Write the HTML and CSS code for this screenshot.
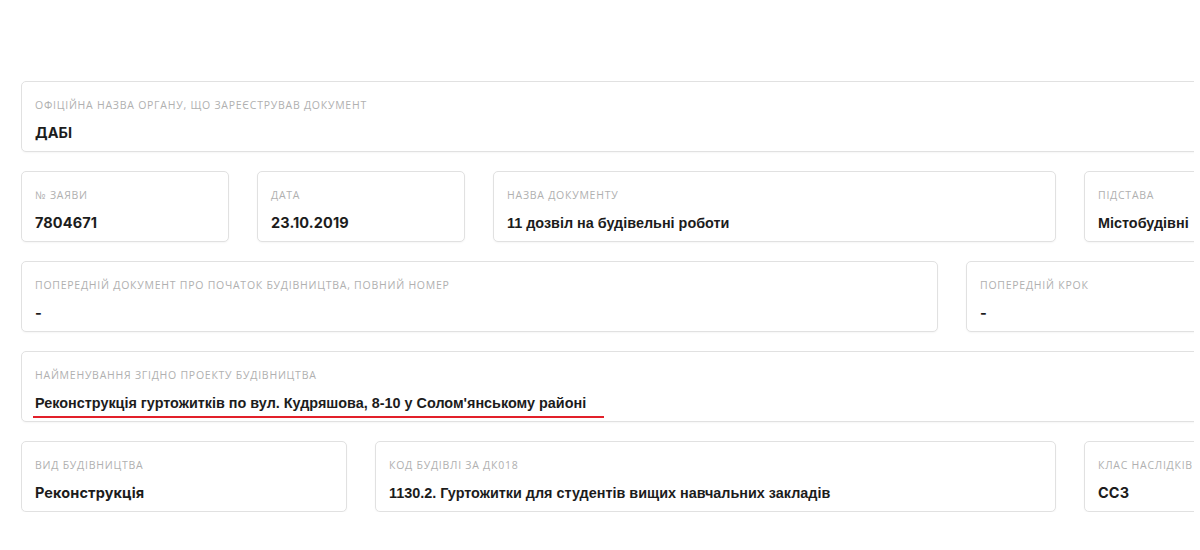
FILE: index.html
```html
<!DOCTYPE html>
<html lang="uk">
<head>
<meta charset="utf-8">
<title>Документ</title>
<link rel="stylesheet" href="styles.css">
</head>
<body>
<div class="page">
  <div class="sheet">
    <div class="row">
      <div class="card w-full">
        <div class="label">Офіційна назва органу, що зареєстрував документ</div>
        <div class="value geo">ДАБІ</div>
      </div>
    </div>
    <div class="row">
      <div class="card w-208">
        <div class="label">№ заяви</div>
        <div class="value geo">7804671</div>
      </div>
      <div class="card w-208">
        <div class="label">Дата</div>
        <div class="value geo">23.10.2019</div>
      </div>
      <div class="card w-563">
        <div class="label">Назва документу</div>
        <div class="value">11 дозвіл на будівельні роботи</div>
      </div>
      <div class="card w-tail">
        <div class="label">Підстава</div>
        <div class="value">Містобудівні</div>
      </div>
    </div>
    <div class="row">
      <div class="card w-917">
        <div class="label">Попередній документ про початок будівництва, повний номер</div>
        <div class="value geo">-</div>
      </div>
      <div class="card w-tail">
        <div class="label">Попередній крок</div>
        <div class="value geo">-</div>
      </div>
    </div>
    <div class="row">
      <div class="card w-full">
        <div class="label">Найменування згідно проекту будівництва</div>
        <div class="value"><span class="marked">Реконструкція гуртожитків по вул. Кудряшова, 8-10 у Солом'янському районі</span></div>
      </div>
    </div>
    <div class="row">
      <div class="card w-326">
        <div class="label">Вид будівництва</div>
        <div class="value geo">Реконструкція</div>
      </div>
      <div class="card w-681">
        <div class="label">Код будівлі за ДК018</div>
        <div class="value">1130.2. Гуртожитки для студентів вищих навчальних закладів</div>
      </div>
      <div class="card w-tail">
        <div class="label">Клас наслідків</div>
        <div class="value geo">СС3</div>
      </div>
    </div>
  </div>
</div>
</body>
</html>
```

FILE: styles.css
```css
html, body {
  margin: 0;
  padding: 0;
  background: #ffffff;
}

.page {
  padding: 81px 0 0 21px;
  height: 550px;
  box-sizing: border-box;
  overflow: hidden;
}

.sheet {
  width: 1173px;
  overflow: hidden;
  display: flex;
  flex-direction: column;
  gap: 19px;
}

.row {
  display: flex;
  gap: 28px;
  width: 1500px;
}

.card {
  flex: 0 0 auto;
  height: 71px;
  box-sizing: border-box;
  border: 1px solid #e1e1e1;
  border-radius: 5px;
  padding: 17px 14px 0 13px;
  background: #ffffff;
  box-shadow: 0 1px 2px rgba(0, 0, 0, 0.04);
  white-space: nowrap;
  overflow: hidden;
}

.w-full { width: 1400px; }
.w-208 { width: 208px; }
.w-563 { width: 563px; }
.w-917 { width: 917px; }
.w-326 { width: 326px; }
.w-681 { width: 681px; }
.w-tail { width: 260px; }

.label {
  font-family: "Open Sans", "Noto Sans", sans-serif;
  font-size: 10.5px;
  line-height: 12px;
  letter-spacing: 0.75px;
  text-transform: uppercase;
  color: #b0b0b0;
}

.value {
  margin-top: 13px;
  font-family: "Liberation Sans", Arial, sans-serif;
  font-weight: 700;
  font-size: 14.4px;
  line-height: 18px;
  color: #1c1c1c;
}

.value.geo {
  font-family: "Inter", "Open Sans", sans-serif;
  font-size: 14.5px;
  letter-spacing: 0.1px;
}

.marked {
  display: inline-block;
  padding-bottom: 5px;
  margin-left: -2px;
  padding-left: 2px;
  padding-right: 18px;
  border-bottom: 2px solid #e2202a;
  line-height: 16px;
}
```
